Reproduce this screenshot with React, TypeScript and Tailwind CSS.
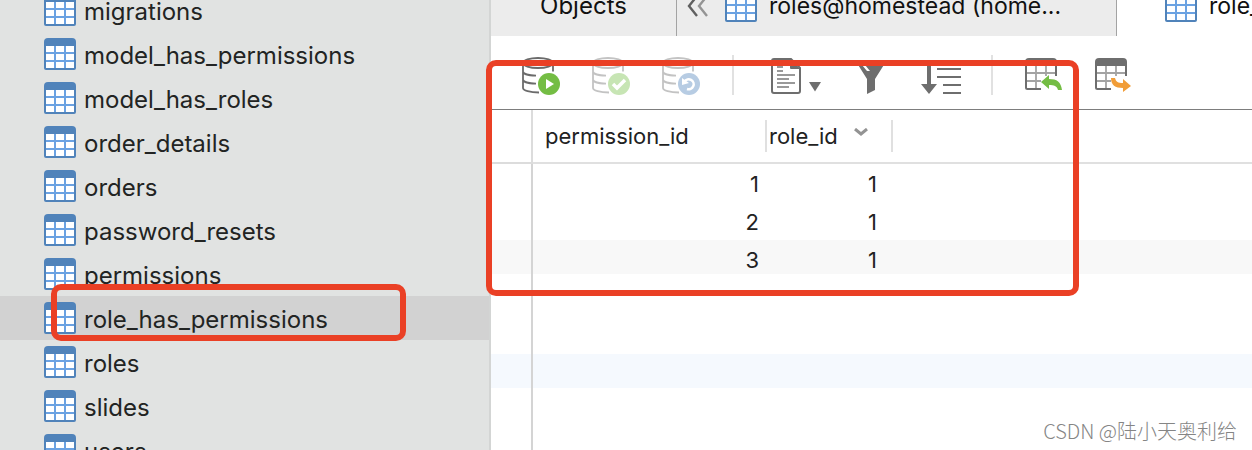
import React from 'react';

const tables = [
  'migrations',
  'model_has_permissions',
  'model_has_roles',
  'order_details',
  'orders',
  'password_resets',
  'permissions',
  'role_has_permissions',
  'roles',
  'slides',
  'users',
];

const records = [
  { permissionId: 1, roleId: 1 },
  { permissionId: 2, roleId: 1 },
  { permissionId: 3, roleId: 1 },
];

const ROW_COUNT = 8;

const TableIcon: React.FC = () => (
  <svg className="h-8 w-8 shrink-0" viewBox="0 0 32 32" aria-hidden="true">
    <path d="M4 0h24a4 4 0 0 1 4 4v26a2 2 0 0 1-2 2H2a2 2 0 0 1-2-2V4a4 4 0 0 1 4-4z" fill="#5083ba" />
    <path d="M2 8h28v22H2z" fill="#6ba2e2" />
    <path
      d="M2 8h8v6H2zM12 8h8v6h-8zM22 8h8v6h-8zM2 16h8v6H2zM12 16h8v6h-8zM22 16h8v6h-8zM2 24h8v6H2zM12 24h8v6h-8zM22 24h8v6h-8z"
      fill="#fff"
    />
  </svg>
);

const DatabaseIcon: React.FC<{ stroke: string; badge: string; children: React.ReactNode }> = ({
  stroke,
  badge,
  children,
}) => (
  <svg className="h-[42px] w-[38px]" viewBox="0 0 38 42" fill="none" aria-hidden="true">
    <g stroke={stroke} strokeWidth="1.8">
      <ellipse cx="16" cy="9" rx="15" ry="5" />
      <path d="M1 9v25c0 2.500 7 4.500 16 4.500M31 9v8.500M1 17.500c0 2.500 6 4 13 4.200M1 25.500c0 2.500 6 4 13 4.200" />
    </g>
    <circle cx="27" cy="30" r="12" fill="#fff" />
    <circle cx="27" cy="30" r="11" fill={badge} />
    {children}
  </svg>
);

const GridIcon: React.FC<{ children: React.ReactNode }> = ({ children }) => (
  <svg className="h-[42px] w-[38px]" viewBox="0 0 38 42" fill="none" aria-hidden="true">
    <path d="M11 12v24M21 12v10M1 19h30M1 27h15" stroke="#a3a3a3" strokeWidth="1.800" />
    <path d="M1 10v23.500a1.500 1.500 0 0 0 1.500 1.500H16M31 10v12" stroke="#6e6e6e" strokeWidth="2" />
    <path d="M0 12V8a4 4 0 0 1 4-4h24a4 4 0 0 1 4 4v4z" fill="#6e6e6e" />
    {children}
  </svg>
);

const ToolbarSeparator: React.FC = () => <div className="h-10 w-0.5 shrink-0 bg-[#e1e1e1]" />;

const Sidebar: React.FC = () => (
  <nav className="relative w-[491px] shrink-0 overflow-hidden border-r-2 border-[#d3d5d4] bg-[#e1e3e2]">
    <ul className="-mt-3">
      {tables.map(name => (
        <li key={name} className={name === 'role_has_permissions' ? 'bg-[#d2d2d2]' : ''}>
          <a href={`#${name}`} className="flex h-11 items-center gap-2 pl-11 text-[24px] text-[#222423]">
            <TableIcon />
            <span className="pt-1">{name}</span>
          </a>
        </li>
      ))}
    </ul>
    <div className="pointer-events-none absolute left-[51px] top-[284px] h-[57px] w-[355px] rounded-[10px] border-6 border-[#ea4025]" />
  </nav>
);

const TabBar: React.FC = () => (
  <div className="h-9 shrink-0 overflow-hidden">
    <div className="-mt-6 flex h-[60px] text-[23px] whitespace-nowrap text-[#111]" role="tablist">
      <button role="tab" className="w-[186px] shrink-0 border-r border-[#a3a3a3] bg-[#ececec] text-[24px]">
        Objects
      </button>
      <div className="flex w-[440px] shrink-0 items-center border-r border-[#a3a3a3] bg-[#ececec] pl-2.5">
        <button aria-label="Previous tabs">
          <svg className="h-8 w-[22px]" viewBox="0 0 22 32" fill="none" strokeWidth="2.4" aria-hidden="true">
            <path d="M10 6L2 16l8 10" stroke="#606060" />
            <path d="M20 6l-8 10 8 10" stroke="#949494" />
          </svg>
        </button>
        <button role="tab" className="flex items-center gap-3 pl-4">
          <TableIcon />
          roles@homestead (home...
        </button>
      </div>
      <button role="tab" aria-selected="true" className="flex flex-1 items-center gap-3 overflow-hidden bg-white pl-12">
        <TableIcon />
        role_
      </button>
    </div>
  </div>
);

const Toolbar: React.FC = () => (
  <div className="flex h-[74px] shrink-0 items-center gap-8 border-b border-[#7d7d7d] pt-[5px] pl-[31px]">
    <button aria-label="Begin transaction">
      <DatabaseIcon stroke="#6b6b6b" badge="#74bd44">
        <path d="M24 25l8 5-8 5z" fill="#fff" />
      </DatabaseIcon>
    </button>
    <button aria-label="Commit">
      <DatabaseIcon stroke="#c3c3c3" badge="#c7e5b4">
        <path d="M21 30l4 4 8-8" stroke="#fff" strokeWidth="3.500" />
      </DatabaseIcon>
    </button>
    <button aria-label="Rollback">
      <DatabaseIcon stroke="#c3c3c3" badge="#b7cce3">
        <path d="M22.500 27.500a5 5 0 1 1 2.500 7.500" stroke="#fff" strokeWidth="2.500" />
        <path d="M20 31v-7l7 5z" fill="#fff" />
      </DatabaseIcon>
    </button>
    <ToolbarSeparator />
    <button aria-label="Text">
      <svg className="h-[42px] w-[55px]" viewBox="0 0 55 42" fill="none" aria-hidden="true">
        <path d="M8 5h17l9 9v23a2 2 0 0 1-2 2H8a2 2 0 0 1-2-2V7a2 2 0 0 1 2-2z" stroke="#6e6e6e" strokeWidth="2" />
        <path d="M24 5l10 10H25a1 1 0 0 1-1-1z" fill="#6e6e6e" />
        <path d="M11 13h6M11 17h6M11 21h18M11 25h12M11 29h18M11 33h12" stroke="#999" strokeWidth="1.800" />
        <path d="M43 28h12l-6 9.500z" fill="#6e6e6e" />
      </svg>
    </button>
    <button aria-label="Filter">
      <svg className="h-[42px] w-9" viewBox="0 0 36 42" aria-hidden="true">
        <path d="M2 6h32L22 25v11l-8 4V25z" fill="#6e6e6e" />
        <path d="M9 11h3l5 6h-3z" fill="#fff" />
      </svg>
    </button>
    <button aria-label="Sort">
      <svg className="h-[42px] w-[38px] overflow-visible" viewBox="0 0 38 42" aria-hidden="true">
        <path d="M6 6h4v24h6l-8 10-8-10h6z" fill="#6e6e6e" />
        <path d="M16 6h24v2H16zM16 14h24v2H16zM16 22h24v2H16zM22 30h18v2H22zM22 38h18v2H22z" fill="#6e6e6e" />
      </svg>
    </button>
    <ToolbarSeparator />
    <button aria-label="Import">
      <GridIcon>
        <path d="M16 28l8-7v4c8 0 12 3 13 11h-4c-1-4-4-5-9-5v4z" fill="#74bd44" />
      </GridIcon>
    </button>
    <button aria-label="Export">
      <GridIcon>
        <path d="M36 32l-8 6v-4c-8 0-12-3-12-10h4c1 4 3 5 8 5v-4z" fill="#f19d38" />
      </GridIcon>
    </button>
  </div>
);

const stripeClass = (index: number) => {
  switch (index) {
    case 2:
      return 'h-[34px] bg-[#f8f8f8]';
    case 5:
      return 'h-[34px] bg-[#f5f9fe]';
    default:
      return 'h-[34px]';
  }
};

const DataGrid: React.FC = () => (
  <div className="min-h-0 flex-1 overflow-hidden">
    <table className="w-full table-fixed border-separate border-spacing-0 text-[22px] text-[#222]">
      <colgroup>
        <col className="w-[42px]" />
        <col className="w-[234px]" />
        <col className="w-[126px]" />
        <col />
      </colgroup>
      <thead>
        <tr className="h-[54px] text-left">
          <th className="border-r-2 border-b-2 border-[#dcdcdc] p-0" aria-label="Row" />
          <th className="border-b-2 border-[#e0e0e0] p-0 font-normal">
            <div className="flex h-8 items-center border-r-2 border-[#e0e0e0] pl-3">permission_id</div>
          </th>
          <th className="border-b-2 border-[#e0e0e0] p-0 font-normal">
            <div className="flex h-8 items-center gap-4 border-r-2 border-[#e0e0e0] pl-0.5">
              role_id
              <svg className="mb-2 h-2 w-3.5" viewBox="0 0 14 8" fill="none" aria-hidden="true">
                <path d="M1 1l6 5 6-5" stroke="#939393" strokeWidth="3" />
              </svg>
            </div>
          </th>
          <th className="border-b-2 border-[#e0e0e0] p-0" aria-label="Empty" />
        </tr>
      </thead>
      <tbody>
        {Array.from({ length: ROW_COUNT }, (_, i) => (
          <tr key={i} className="h-[38px] text-right align-top leading-10">
            <td className="border-r-2 border-[#d4d4d4] p-0">
              <div className={stripeClass(i)} />
            </td>
            <td className="p-0">
              <div className={`${stripeClass(i)} pr-2`}>{records[i]?.permissionId}</div>
            </td>
            <td className="p-0">
              <div className={`${stripeClass(i)} pr-4`}>{records[i]?.roleId}</div>
            </td>
            <td className="p-0">
              <div className={stripeClass(i)} />
            </td>
          </tr>
        ))}
      </tbody>
    </table>
  </div>
);

const App: React.FC = () => {
  return (
    <div className="relative flex h-screen overflow-hidden bg-white font-['Inter','Noto_Sans_CJK_SC',sans-serif]">
      <Sidebar />
      <main className="flex min-w-0 flex-1 flex-col">
        <TabBar />
        <Toolbar />
        <DataGrid />
      </main>
      <div className="pointer-events-none absolute left-[486px] top-[60px] h-[236px] w-[593px] rounded-[10px] border-6 border-[#ea4025]" />
      <p className="absolute right-[15px] bottom-1 font-['Noto_Sans_CJK_SC',sans-serif] text-[20px] font-light text-[#858585]">
        CSDN @陆小天奥利给
      </p>
    </div>
  );
};

export default App;
